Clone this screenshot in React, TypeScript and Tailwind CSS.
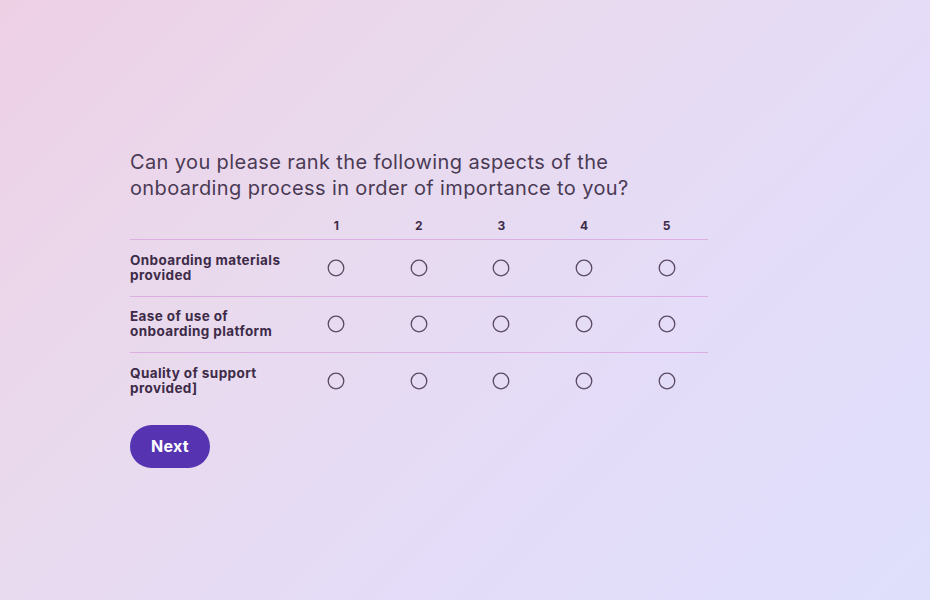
import React from "react";

const rows = [
  ["Onboarding materials", "provided"],
  ["Ease of use of", "onboarding platform"],
  ["Quality of support", "provided]"],
];

function Radio() {
  return (
    <svg width="18" height="18" viewBox="0 0 18 18" className="block">
      <circle cx="9" cy="9" r="7.8" fill="none" stroke="#5a4a63" strokeWidth="1.3" />
    </svg>
  );
}

export default function App() {
  return (
    <div
      className="min-h-screen w-full bg-[linear-gradient(135deg,#eed0e5_0%,#e9daee_35%,#e4dcf8_65%,#dfdffc_100%)] pl-[130px] pt-[149px]"
      style={{ fontFamily: "Inter, 'Open Sans', sans-serif" }}
    >
      <div className="w-[578px]">
        <h1 className="text-[20px] leading-[26px] font-normal text-[#4a3a54] tracking-[0.38px]">
          Can you please rank the following aspects of the
          <br />
          onboarding process in order of importance to you?
        </h1>
        <div className="mt-[12px] flex h-[26px] items-center">
          <div className="w-[165px]" />
          {[1, 2, 3, 4, 5].map((n) => (
            <div key={n} className="flex-1 text-center text-[12px] font-bold text-[#3d2b48]">
              {n}
            </div>
          ))}
        </div>
        {rows.map((r, i) => (
          <div
            key={i}
            className="flex h-[56.5px] items-center border-t-[1.5px] border-[#dcaee2]"
          >
            <div className="w-[165px] text-[13.5px] leading-[15px] font-[650] tracking-[0.4px] text-[#3d2b48]">
              {r[0]}
              <br />
              {r[1]}
            </div>
            {[1, 2, 3, 4, 5].map((n) => (
              <div key={n} className="flex flex-1 justify-center">
                <Radio />
              </div>
            ))}
          </div>
        ))}
        <button className="mt-[16px] h-[43px] w-[80px] rounded-full bg-[#5533b1] text-[16px] font-bold tracking-[0.3px] text-white">
          Next
        </button>
      </div>
    </div>
  );
}
